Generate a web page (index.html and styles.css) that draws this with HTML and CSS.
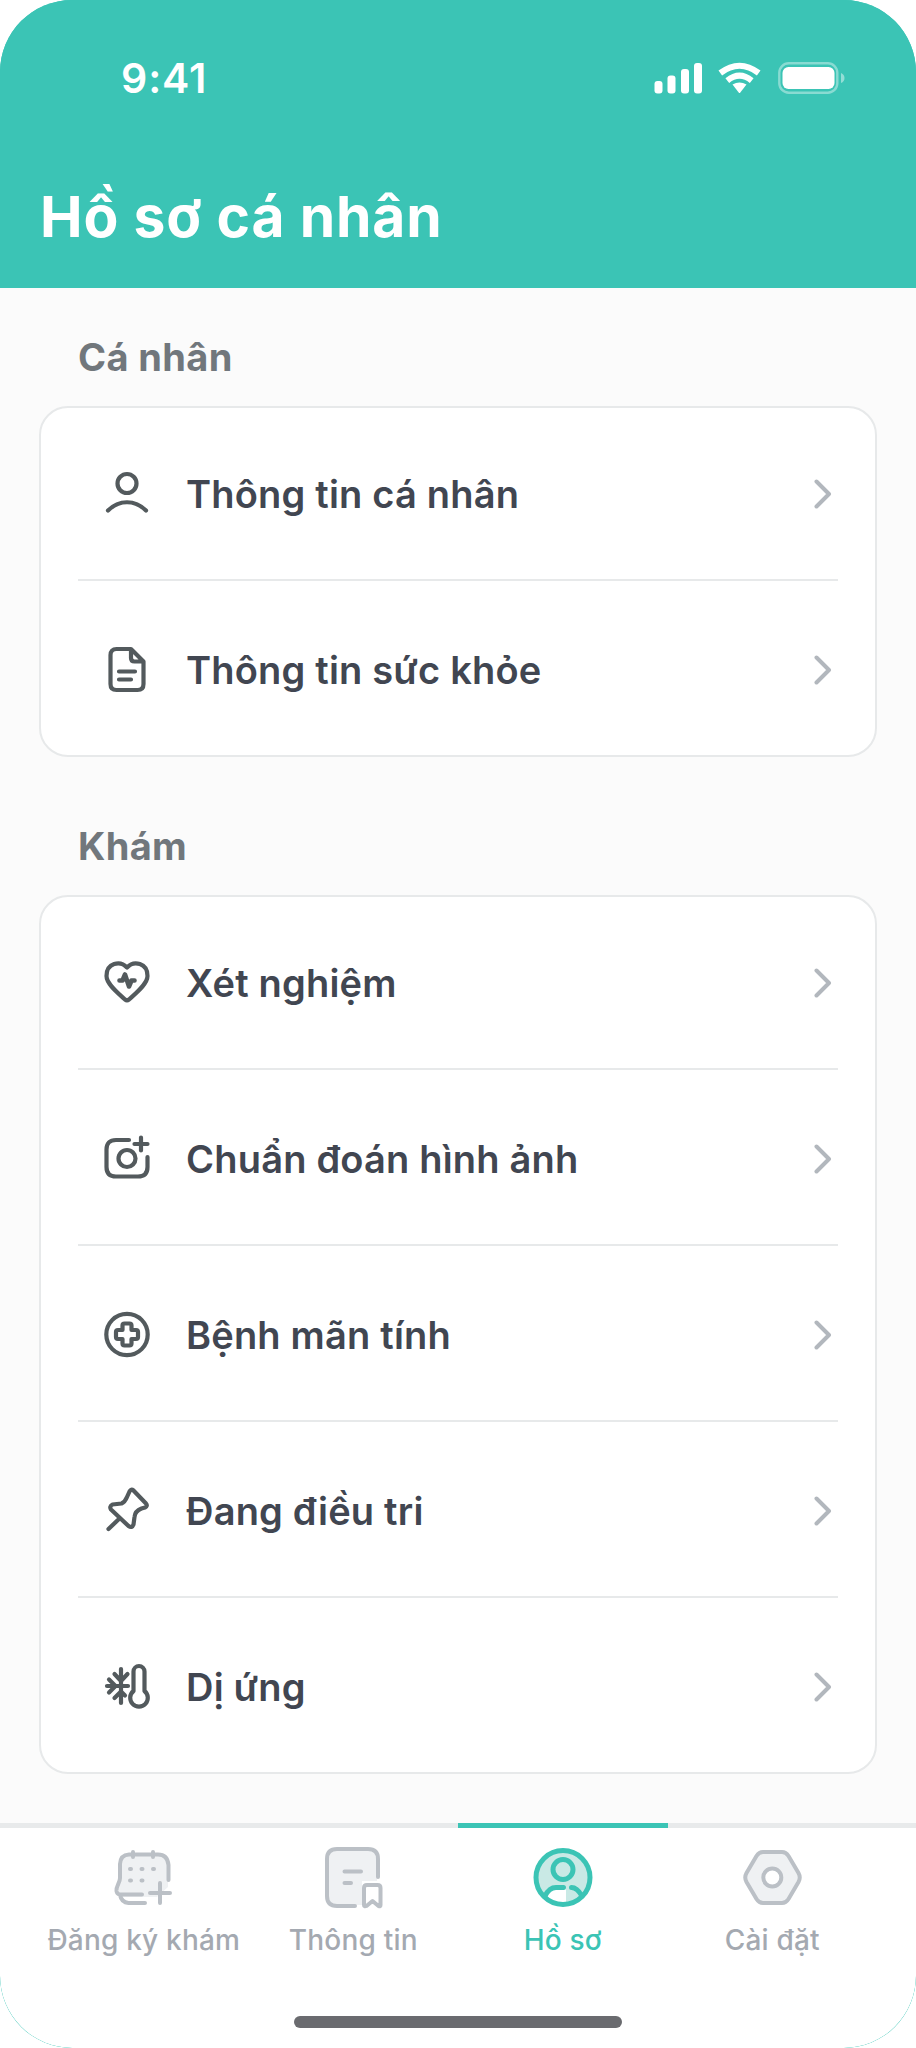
FILE: index.html
```html
<!DOCTYPE html>
<html lang="vi">
<head>
<meta charset="utf-8">
<title>Hồ sơ cá nhân</title>
<link rel="stylesheet" href="styles.css">
</head>
<body>
<div class="phone">
  <header class="header">
    <div class="status">
      <span class="time">9:41</span>
      <svg class="status-icons" width="192" height="34" viewBox="0 0 192 34">
        <g fill="#fff">
          <rect x="0.500" y="19" width="8" height="12.500" rx="3"/>
          <rect x="13.500" y="13.500" width="8" height="18" rx="3"/>
          <rect x="27" y="7" width="8" height="24.500" rx="3"/>
          <rect x="40" y="1" width="8" height="30.500" rx="3"/>
          <path d="M78.500 22.500 Q85.500 18.500 92.500 22.500 L86.300 30.400 Q85.500 31.400 84.700 30.400 Z"/>
        </g>
        <g fill="none" stroke="#fff" stroke-width="6">
          <path d="M66.300 11 Q85.500 -3.500 104.700 11"/>
          <path d="M73.300 18.600 Q85.500 8.800 97.700 18.600"/>
        </g>
        <rect x="125.300" y="1.300" width="58" height="29.400" rx="9.500" fill="none" stroke="#fff" stroke-opacity=".4" stroke-width="2.400"/>
        <rect x="128.500" y="5" width="52" height="22" rx="6" fill="#fff"/>
        <path d="M187 11 Q190.500 12.500 190.500 16 T187 21 Z" fill="#fff" fill-opacity=".45"/>
      </svg>
    </div>
    <h1 class="title">Hồ sơ cá nhân</h1>
  </header>

  <main class="content">
    <h2 class="section-title">Cá nhân</h2>
    <section class="card">
      <ul class="list">
        <li class="row">
          <svg class="icon" viewBox="0 0 48 48"><circle cx="24" cy="13.500" r="9.500"/><path d="M5 40.500C16 29.500 32 29.500 43 40.500"/></svg>
          <span class="label">Thông tin cá nhân</span>
          <svg class="chevron" viewBox="0 0 18 30"><path d="M2.500 2.500 15 15 2.500 27.500"/></svg>
        </li>
        <li class="row">
          <svg class="icon" viewBox="0 0 48 48"><path d="M28 3H13.500C9.500 3 7.500 5.500 7.500 9V38C7.500 42 9.500 44 13.500 44H34.500C38.500 44 40.500 42 40.500 38V15.500ZM28 3V12C28 14.500 29 15.500 31.500 15.500H40.500M16 25.500H32M16 33.500H28"/></svg>
          <span class="label">Thông tin sức khỏe</span>
          <svg class="chevron" viewBox="0 0 18 30"><path d="M2.500 2.500 15 15 2.500 27.500"/></svg>
        </li>
      </ul>
    </section>

    <h2 class="section-title second">Khám</h2>
    <section class="card">
      <ul class="list">
        <li class="row">
          <svg class="icon" viewBox="0 0 48 48"><path d="M24 8.500C17 1 3.500 4 3.500 17C3.500 25 15 34 22 40.500Q24 42 26 40.500C33 34 44.500 25 44.500 17C44.500 4 31 1 24 8.500Z"/><path class="pulse" d="M16.500 21.500H19.500L22 15.500 26 27.500 28.500 21.500H31.500"/></svg>
          <span class="label">Xét nghiệm</span>
          <svg class="chevron" viewBox="0 0 18 30"><path d="M2.500 2.500 15 15 2.500 27.500"/></svg>
        </li>
        <li class="row">
          <svg class="icon" viewBox="0 0 48 48"><path d="M26 5H13Q3.500 5 3.500 14.500V32Q3.500 41.500 13 41.500H35Q44.500 41.500 44.500 32V22M31.500 9H44.500M38 2.500V15.500"/><circle cx="24" cy="23.500" r="8.500"/></svg>
          <span class="label">Chuẩn đoán hình ảnh</span>
          <svg class="chevron" viewBox="0 0 18 30"><path d="M2.500 2.500 15 15 2.500 27.500"/></svg>
        </li>
        <li class="row">
          <svg class="icon" viewBox="0 0 48 48"><circle cx="24" cy="23.500" r="20.700"/><path d="M21.500 12.500H26.500Q28.500 12.500 28.500 14.500V19H33Q35 19 35 21V26Q35 28 33 28H28.500V32.500Q28.500 34.500 26.500 34.500H21.500Q19.500 34.500 19.500 32.500V28H15Q13 28 13 26V21Q13 19 15 19H19.500V14.500Q19.500 12.500 21.500 12.500Z"/></svg>
          <span class="label">Bệnh mãn tính</span>
          <svg class="chevron" viewBox="0 0 18 30"><path d="M2.500 2.500 15 15 2.500 27.500"/></svg>
        </li>
        <li class="row">
          <svg class="icon" viewBox="0 0 48 48"><path d="M30.500 3.500 43 16.500Q45 19 42 20.500L38.500 21.500Q32 24 31.500 30L30.500 37.500Q29 41.500 25.500 39L8 22.500Q6 19.500 9.500 17.500L18.500 16.500Q22 15 24 10L26.500 4.500Q28 1.500 30.500 3.500ZM17 31 5.500 42"/></svg>
          <span class="label">Đang điều tri</span>
          <svg class="chevron" viewBox="0 0 18 30"><path d="M2.500 2.500 15 15 2.500 27.500"/></svg>
        </li>
        <li class="row">
          <svg class="icon" viewBox="0 0 48 48"><path d="M18 6V40M4 23H25M11.500 11 18 18 24.500 11M11.500 35 18 28.500 22 32.500M6 16.500 12.500 23 6 29.500"/><path d="M30.500 8.500A5.500 5.500 0 0 1 41.500 8.500V28A8.800 8.800 0 1 1 30.500 28Z"/></svg>
          <span class="label">Dị ứng</span>
          <svg class="chevron" viewBox="0 0 18 30"><path d="M2.500 2.500 15 15 2.500 27.500"/></svg>
        </li>
      </ul>
    </section>
  </main>

  <footer class="footer">
    <nav class="tabs">
      <a class="tab">
        <svg class="tab-icon" viewBox="0 0 64 64"><path class="tint" d="M17 9H46Q55 9 56 18V42L45 52H8Q5 45 9 36V18Q9 9 17 9Z"/><path d="M56.500 35V20Q55.500 9.500 46 9.500H17Q8.500 10 8 19V33C8 38 4 41 4.500 46Q5 49 7.500 49.500H30M8 50Q9.500 57.500 16.500 58H33M21 7V12M41 7V12M38 48H58M48 38V58"/><path class="dots" d="M18 24h1M29.500 24h1M41 24h1M18 35.500h1M29.500 35.500h1"/></svg>
        <span>Đăng ký khám</span>
      </a>
      <a class="tab">
        <svg class="tab-icon" viewBox="0 0 64 64"><path class="tint" d="M14 4H47Q56 4 56 13V36H41V60H14Q5 60 5 51V13Q5 4 14 4Z"/><path d="M57 32V14Q57 4 47 4H16Q6 4 6 14V51Q6 61 16 61H34M23.500 26.500H40M23.500 38H30"/><path fill="#fff" d="M46 40H56.500Q59.500 40 59.500 43V60Q59.500 62 57.500 61L51.500 56 45.500 61Q43 62 43 60V43Q43 40 46 40Z"/></svg>
        <span>Thông tin</span>
      </a>
      <a class="tab active">
        <svg class="tab-icon" viewBox="0 0 64 64"><circle class="tint" cx="32" cy="32.500" r="27"/><path fill="#fff" stroke="none" d="M14 51Q18 42 27 42H35V58Q22 60 14 51Z"/><circle cx="32" cy="32.500" r="27"/><circle cx="32" cy="24.500" r="10"/><path d="M14 51C17 45 20 42.500 25 42.500H32.500M40.500 42.500Q46 42.500 51 51"/></svg>
        <span>Hồ sơ</span>
      </a>
      <a class="tab">
        <svg class="tab-icon" viewBox="0 0 64 64"><path class="tint edge" d="M23 7H42Q46 7 48.500 11L58.500 28Q61 32.500 58.500 37L48.500 54Q46 58 42 58H23Q19 58 16.500 54L6.500 37Q4 32.500 6.500 28L16.500 11Q19 7 23 7Z"/><circle cx="32.300" cy="32.500" r="9" fill="#fff"/></svg>
        <span>Cài đặt</span>
      </a>
    </nav>
    <div class="home-bar"></div>
  </footer>
</div>
</body>
</html>
```
FILE: styles.css
```css
* { box-sizing: border-box; }
body { margin: 0; background: #fff; font-family: Inter, "Noto Sans", sans-serif; }
.phone {
  width: 916px; height: 2048px;
  display: flex; flex-direction: column;
  background: #3bc4b5;
  border-radius: 72px;
  overflow: hidden;
}
.header { height: 288px; background: #3bc4b5; color: #fff; }
.status { display: flex; justify-content: space-between; padding: 62px 70px 0 121px; height: 170px; }
.time { font-size: 41px; font-weight: 600; line-height: 33px; letter-spacing: 0.900px; }
.title { margin: 0; padding-left: 40px; font-size: 57px; font-weight: 700; line-height: 93px; letter-spacing: 0.850px; }
.content { height: 1535px; padding: 38px 39px 0; background: #fbfbfb; }
.section-title { margin: 0; padding-left: 39px; height: 80px; font-size: 38px; font-weight: 700; line-height: 63px; letter-spacing: 0.350px; color: #71777c; }
.section-title.second { height: 138px; padding-top: 58px; }
.card { background: #fff; border: 2px solid #e7e9ea; border-radius: 29px; }
.list { list-style: none; margin: -3px 0 -2px; padding: 0 37px; }
.row { height: 176px; padding: 3px 6px 0 25px; display: flex; align-items: center; border-bottom: 2px solid #e7e9ea; color: #414651; }
.row:last-child { border-bottom-color: transparent; }
.icon { width: 48px; height: 48px; margin-right: 35px; fill: none; stroke: #535a5d; stroke-width: 4.200; stroke-linecap: round; stroke-linejoin: round; }
.pulse { stroke-width: 4.600; }
.label { flex: 1; font-size: 38px; font-weight: 600; line-height: 50px; letter-spacing: 0.200px; }
.chevron { width: 18px; height: 30px; fill: none; stroke: #b2b7bd; stroke-width: 4; stroke-linecap: round; stroke-linejoin: round; }
.footer { height: 225px; background: #fff; border-top: 5px solid #e8eaeb; border-radius: 0 0 72.500px 72.500px; display: flex; flex-direction: column; align-items: center; }
.tabs { width: 838px; display: flex; height: 188px; margin-top: -5px; }
.tab { flex: 1; display: flex; flex-direction: column; align-items: center; border-top: 5px solid transparent; padding-top: 17px; font-size: 28px; font-weight: 500; line-height: 40px; letter-spacing: 0.200px; color: #a4a9b1; white-space: nowrap; }
.tab.active { border-top-color: #3bc4b5; color: #3bc4b5; }
.tab-icon { width: 64px; height: 64px; margin-bottom: 11px; flex: none; fill: none; stroke: #bbc0c6; stroke-width: 4; stroke-linecap: round; stroke-linejoin: round; }
.tint { fill: #eff1f3; stroke: none; }
.tint.edge { stroke: #bbc0c6; }
.dots { stroke-width: 4; }
.active .tab-icon { stroke: #3bc4b5; stroke-width: 5; }
.active .tint { fill: #c9e9e5; }
.home-bar { width: 328px; height: 12px; margin-top: 5px; border-radius: 6px; background: #6a6b6f; }
```
